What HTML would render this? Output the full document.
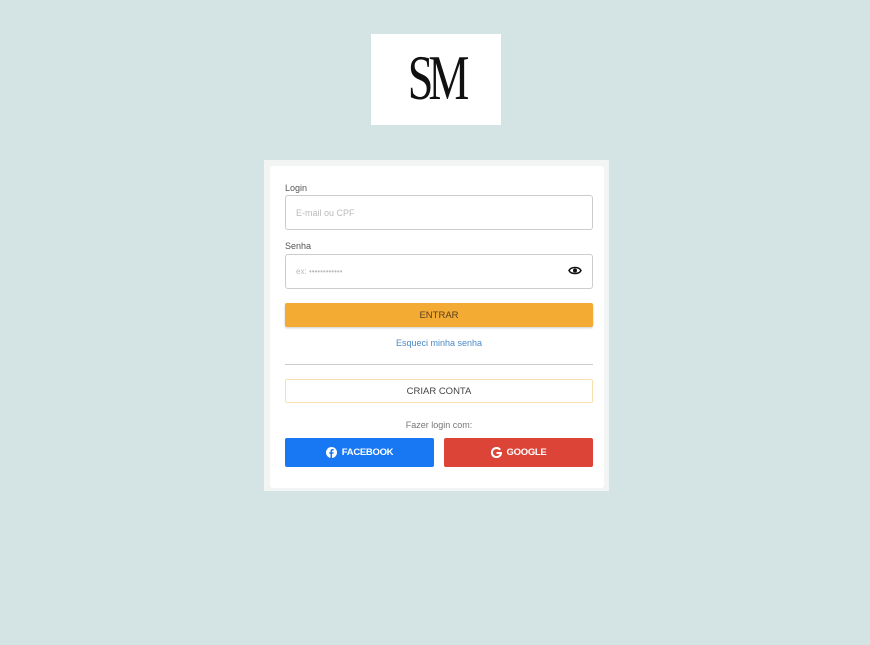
<!DOCTYPE html>
<html><head><style>
*{box-sizing:border-box;margin:0;padding:0}
body{width:870px;height:645px;background:#d4e4e4;font-family:"Liberation Sans",sans-serif;position:relative;overflow:hidden}
.a{position:absolute}
.logo{left:371px;top:34px;width:130px;height:91px;background:#fff}
.sm{position:absolute;left:0;width:130px;top:12px;text-align:center;font-family:"Liberation Serif",serif;font-size:64px;line-height:64px;color:#111;letter-spacing:-7px;transform:scaleX(.72);font-weight:normal}
.outer{left:264px;top:160px;width:345px;height:331px;background:#f3f5f5}
.card{left:270px;top:166px;width:334px;height:322px;background:#fff;border-radius:3px}
.lbl{font-size:9px;color:#555}
.inp{left:285px;width:308px;height:35px;border:1px solid #ccc;border-radius:3px;font-size:9px;color:#bbb;padding-left:10px;display:flex;align-items:center}
.btn{display:flex;align-items:center;justify-content:center;font-size:9.5px;border-radius:2px}
</style></head><body>
<div class="a logo"><div class="sm">SM</div></div>
<div class="a outer"></div>
<div class="a card"></div>
<div class="a lbl" style="left:285px;top:183px">Login</div>
<div class="a inp" style="top:195px">E-mail ou CPF</div>
<div class="a lbl" style="left:285px;top:241px">Senha</div>
<div class="a inp" style="top:254px;font-size:8px">ex: ••••••••••••</div>
<svg class="a" style="left:568px;top:265px" width="14" height="11" viewBox="0 0 14 11"><path d="M1 5.5C3 1.5 11 1.5 13 5.5C11 9.5 3 9.5 1 5.5Z" fill="none" stroke="#111" stroke-width="1.5"/><circle cx="7" cy="5.5" r="2" fill="#111"/></svg>
<div class="a btn" style="left:285px;top:303px;width:308px;height:24px;background:#f3ab33;color:#5a4020;box-shadow:0 1px 2px rgba(0,0,0,.2)">ENTRAR</div>
<div class="a" style="left:285px;width:308px;top:338px;text-align:center;font-size:9px;color:#4a8ac4">Esqueci minha senha</div>
<div class="a" style="left:285px;top:364px;width:308px;height:1px;background:#ccc"></div>
<div class="a btn" style="left:285px;top:379px;width:308px;height:24px;border:1px solid #f8dfb0;color:#444">CRIAR CONTA</div>
<div class="a" style="left:285px;width:308px;top:420px;text-align:center;font-size:9px;color:#777">Fazer login com:</div>
<div class="a btn" style="left:285px;top:438px;width:149px;height:29px;background:#1877f2;color:#fff;font-weight:bold;letter-spacing:-.3px"><svg width="11" height="11" viewBox="0 0 12 12" style="margin-right:5px"><circle cx="6" cy="6" r="6" fill="#fff"/><path d="M6.6 12V7.4h1.5l.3-1.7H6.6V4.7c0-.5.2-.9.9-.9h.9V2.3c-.3 0-.8-.1-1.3-.1-1.4 0-2.2.8-2.2 2.3v1.2H3.5v1.7h1.4V12z" fill="#1877f2"/></svg>FACEBOOK</div>
<div class="a btn" style="left:444px;top:438px;width:149px;height:29px;background:#dc4437;color:#fff;font-weight:bold;letter-spacing:-.3px"><svg width="11" height="11" viewBox="0 0 12 12" style="margin-right:5px"><path d="M10 3A5 5 0 1 0 11 6.5H6" fill="none" stroke="#fff" stroke-width="2.2"/></svg>GOOGLE</div>
</body></html>
